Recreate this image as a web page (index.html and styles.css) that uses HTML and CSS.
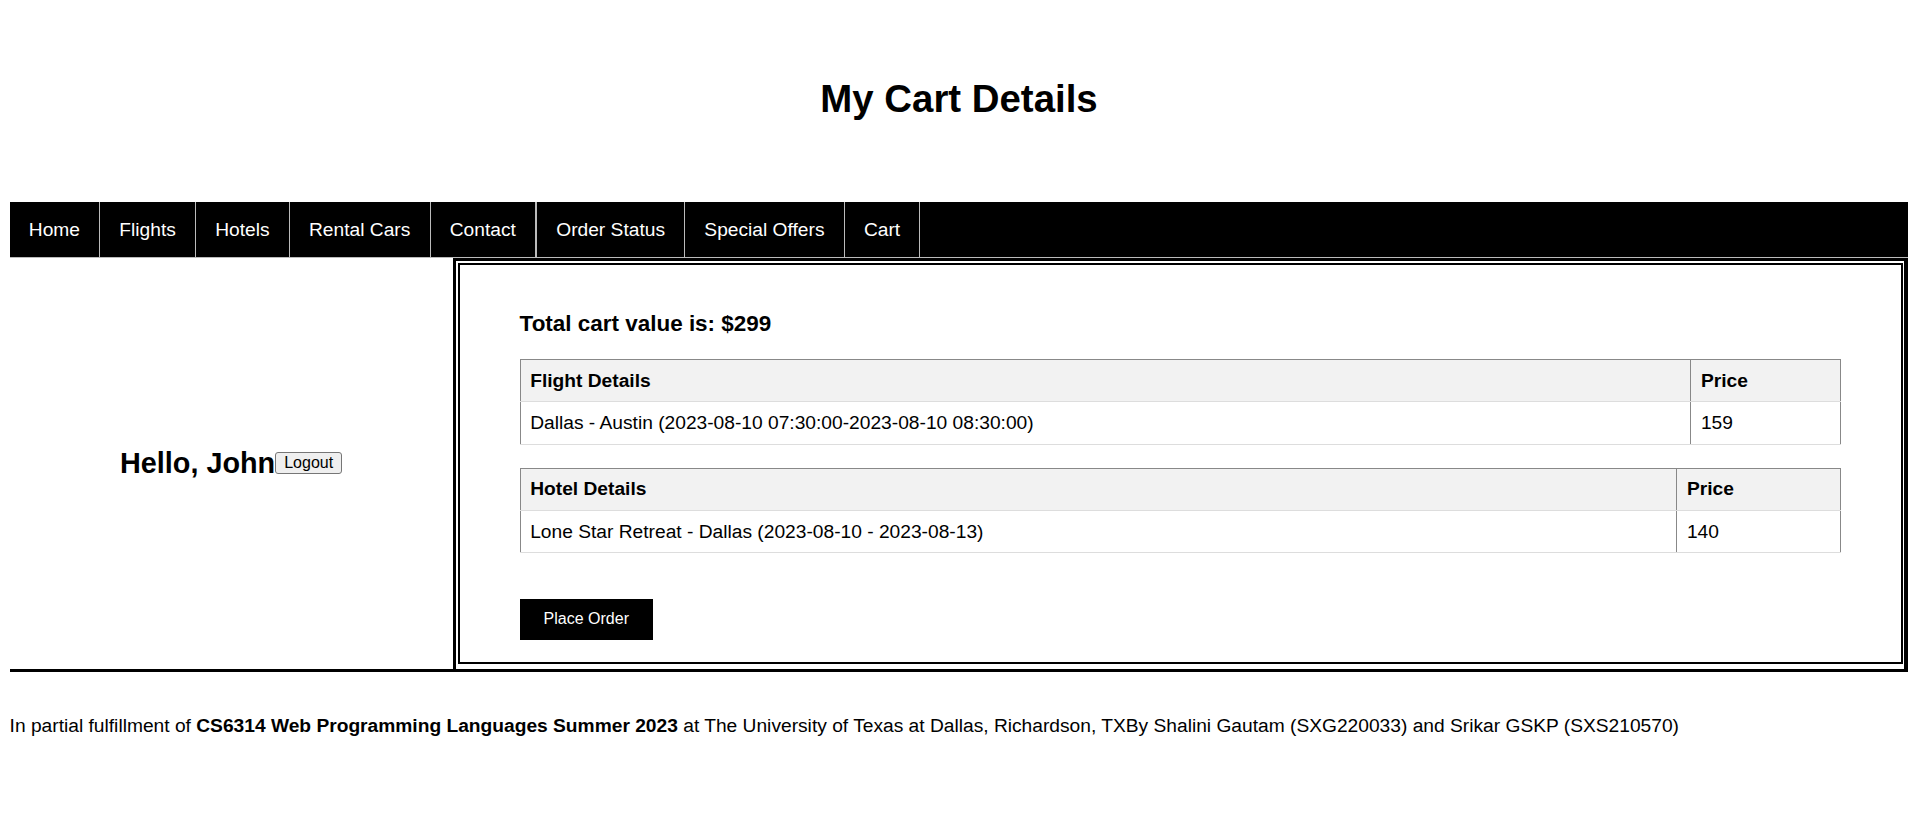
FILE: index.html
```html
<!DOCTYPE html>
<html lang="en">
<head>
<meta charset="utf-8">
<title>My Cart Details</title>
<link rel="stylesheet" href="styles.css">
</head>
<body>
<header class="page-header">
  <h1 class="title">My Cart Details</h1>
</header>
<nav class="nav">
  <ul class="nav-list">
    <li class="nav-item"><a class="nav-link" href="#">Home</a></li>
    <li class="nav-item"><a class="nav-link" href="#">Flights</a></li>
    <li class="nav-item"><a class="nav-link" href="#">Hotels</a></li>
    <li class="nav-item"><a class="nav-link" href="#">Rental Cars</a></li>
    <li class="nav-item nav-item-wide"><a class="nav-link" href="#">Contact</a></li>
    <li class="nav-item"><a class="nav-link" href="#">Order Status</a></li>
    <li class="nav-item"><a class="nav-link" href="#">Special Offers</a></li>
    <li class="nav-item"><a class="nav-link" href="#">Cart</a></li>
  </ul>
</nav>
<main class="main">
  <aside class="side">
    <div class="welcome">
      <h2 class="hello">Hello, John</h2>
      <button class="logout" type="button">Logout</button>
    </div>
  </aside>
  <section class="panel">
    <div class="panel-inner">
      <h3 class="total">Total cart value is: $299</h3>
      <table class="cart-table">
        <thead>
          <tr><th>Flight Details</th><th>Price</th></tr>
        </thead>
        <tbody>
          <tr><td>Dallas - Austin (2023-08-10 07:30:00-2023-08-10 08:30:00)</td><td>159</td></tr>
        </tbody>
      </table>
      <table class="cart-table">
        <thead>
          <tr><th>Hotel Details</th><th>Price</th></tr>
        </thead>
        <tbody>
          <tr><td>Lone Star Retreat - Dallas (2023-08-10 - 2023-08-13)</td><td>140</td></tr>
        </tbody>
      </table>
      <div class="actions">
        <button class="place-order" type="button">Place Order</button>
      </div>
    </div>
  </section>
</main>
<footer class="footer">
  <p class="footer-text">In partial fulfillment of <b>CS6314 Web Programming Languages Summer 2023</b> at The University of Texas at Dallas, Richardson, TXBy Shalini Gautam (SXG220033) and Srikar GSKP (SXS210570)</p>
</footer>
</body>
</html>
```

FILE: styles.css
```css
html, body {
  background: #fff;
}

body {
  margin: 9.6px;
  font-family: "Liberation Sans", Arial, sans-serif;
  font-size: 19.2px;
  color: #000;
}

.page-header {
  padding: 41.6px 0 55.3px;
}

.title {
  margin: 25.7px 0;
  font-size: 38.4px;
  font-weight: bold;
  text-align: center;
}

.nav {
  background: #000;
  border-bottom: 1px solid #bbb;
}

.nav-list {
  display: flex;
  list-style: none;
  margin: 0;
  padding: 0;
}

.nav-item {
  border-right: 1px solid #bbb;
}

.nav-item-wide {
  border-right-width: 2px;
}

.nav-link {
  display: block;
  padding: 16.8px 19.2px;
  color: #fff;
  text-decoration: none;
  font-size: 19.2px;
}

.main {
  display: flex;
  border-bottom: 3px solid #000;
}

.side {
  width: 443px;
  flex: 0 0 443px;
  display: flex;
  align-items: center;
  justify-content: center;
}

.welcome {
  display: flex;
  align-items: center;
}

.hello {
  margin: 0;
  font-size: 28.8px;
  font-weight: bold;
}

.logout {
  font-family: "Liberation Sans", Arial, sans-serif;
  font-size: 16px;
  padding: 1px 8px;
  background: #efefef;
  color: #000;
  border: 1px solid #767676;
  border-radius: 3px;
}

.panel {
  flex: 1 1 auto;
  min-width: 0;
  border-top: 3px solid #000;
  border-left: 3px solid #000;
  border-right: 4px solid #000;
  padding: 2px 1px 5px 2px;
}

.panel-inner {
  border: 2px solid #000;
  padding: 22.8px 60px 22px;
}

.total {
  margin: 22.46px 0;
  font-size: 22.46px;
  font-weight: bold;
}

.cart-table {
  width: 100%;
  border-collapse: collapse;
  margin-bottom: 23.3px;
  font-size: 19.2px;
}

.cart-table th,
.cart-table td {
  text-align: left;
  padding: 9.6px;
  border-left: 1px solid #888;
  border-right: 1px solid #888;
  border-bottom: 1px solid #ddd;
}

.cart-table th {
  background: #f2f2f2;
  font-weight: bold;
  border-top: 1px solid #888;
}

.actions {
  margin-top: 45.3px;
}

.place-order {
  font-family: "Liberation Sans", Arial, sans-serif;
  font-size: 16px;
  padding: 11.5px 24px;
  background: #000;
  color: #fff;
  border: none;
  border-radius: 0;
}

.footer {
  padding-top: 24px;
}

.footer-text {
  margin: 19.2px 0;
  font-size: 19.2px;
}
```
